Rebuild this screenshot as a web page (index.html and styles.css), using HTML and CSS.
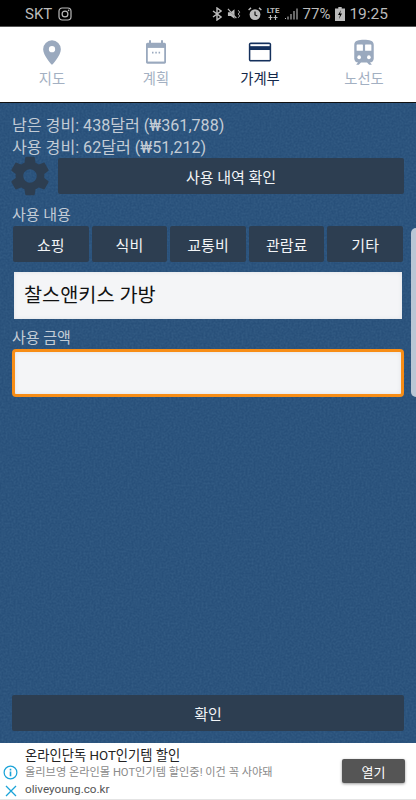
FILE: index.html
```html
<!DOCTYPE html>
<html lang="ko">
<head>
  <meta charset="UTF-8">
  <meta name="viewport" content="width=device-width, initial-scale=1.0">
  <title>가계부</title>
  <link rel="stylesheet" href="styles.css">
</head>
<body>
  <div class="status-bar">
    <div class="status-left">
      <span>SKT</span>
      <svg class="insta" viewBox="0 0 14 14" width="14" height="14"><rect x="1" y="1" width="12" height="12" rx="3.2" fill="none" stroke="#bbb" stroke-width="1.2"/><circle cx="7" cy="7" r="2.9" fill="none" stroke="#bbb" stroke-width="1.2"/><circle cx="10.6" cy="3.4" r=".8" fill="#bbb"/></svg>
    </div>
    <div class="status-right">
      <svg class="st-bt" viewBox="0 0 10 14" width="10" height="14"><path d="M1 4l8 6-4 3V1l4 3-8 6" fill="none" stroke="#bbb" stroke-width="1.4"/></svg>
      <svg class="st-mute" viewBox="0 0 16 14" width="15" height="14"><path d="M1 5h3l4-3v10L4 9H1z" fill="#bbb"/><path d="M1 2l10 10" stroke="#000" stroke-width="1"/><path d="M1 1.500l9 10" stroke="#bbb" stroke-width="1.200"/><path d="M12 3l1.500 2-1.500 2 1.500 2-1.500 2" fill="none" stroke="#bbb" stroke-width="1"/></svg>
      <svg class="st-alarm" viewBox="0 0 14 14" width="14" height="14"><circle cx="7" cy="7.600" r="5.400" fill="#bbb"/><path d="M7 4.500v3.400l2.300 1.200" fill="none" stroke="#000" stroke-width="1.100"/><path d="M.6 3L3 .9M13.400 3L11 .9" stroke="#bbb" stroke-width="1.400"/></svg>
      <div class="lte">
        <span>LTE</span>
        <svg viewBox="0 0 12 5" width="12" height="5"><path d="M3.500 0v5M1.500 2.500h4M8.500 0v5M6.500 2.500h4" stroke="#bbb" stroke-width="1.200"/></svg>
      </div>
      <svg class="st-signal" viewBox="0 0 14 14" width="14" height="14"><path d="M1 11.500h1M4 9.500v3M7 7v5.500M10 4v8.500M13 1.500v11" stroke="#bbb" stroke-width="1.100"/></svg>
      <span class="st-level">77%</span>
      <svg class="st-battery" viewBox="0 0 10 14" width="10" height="14"><path d="M3.300 0h3.400v1.500H10V14H0V1.500h3.300z" fill="#bbb"/><path d="M6 3L3 8h2l-1 4 3-5.500H5z" fill="#000"/></svg>
      <span class="clock">19:25</span>
    </div>
  </div>

  <nav class="tabs">
    <div class="tab">
      <svg viewBox="0 0 24 24" width="28" height="28"><path d="M12 2a7.600 7.600 0 0 0-7.600 7.600C4.400 15.300 12 23 12 23s7.600-7.700 7.600-13.400A7.600 7.600 0 0 0 12 2zm0 10.300a2.700 2.700 0 1 1 0-5.400 2.700 2.700 0 0 1 0 5.400z" fill="#9aa9be"/></svg>
      <span>지도</span>
    </div>
    <div class="tab">
      <svg viewBox="0 0 24 24" width="24" height="28" preserveAspectRatio="none"><path d="M5 2h2v2h10V2h2v2h1.500c.8 0 1.500.7 1.500 1.500v15c0 .8-.7 1.500-1.500 1.500h-17C2.700 22 2 21.300 2 20.500v-15C2 4.700 2.700 4 3.500 4H5z" fill="#9aa9be"/><rect x="3.800" y="8.500" width="16.400" height="11.700" fill="#fff"/><path d="M8 12.500h1.500M11.300 12.500h1.500M14.600 12.500h1.500" stroke="#9aa9be" stroke-width="1.500"/></svg>
      <span>계획</span>
    </div>
    <div class="tab active">
      <svg viewBox="0 0 24 24" width="26" height="28" preserveAspectRatio="none"><path d="M3.500 3.800h17c1 0 1.800.8 1.800 1.800v12.800c0 1-.8 1.800-1.800 1.800h-17c-1 0-1.800-.8-1.800-1.800V5.600c0-1 .8-1.800 1.800-1.800z" fill="#14305c"/><rect x="3.100" y="5.300" width="17.800" height="1.700" fill="#fff"/><rect x="3.100" y="10.300" width="17.800" height="8.500" fill="#fff"/></svg>
      <span>가계부</span>
    </div>
    <div class="tab">
      <svg viewBox="0 0 24 24" width="26" height="28" preserveAspectRatio="none"><path d="M12 1.500c-5 0-9 .6-9 4.500v11.500c0 1.900 1.600 3.500 3.500 3.500L5 22.500v.5h2.200l2-2h5.600l2 2H19v-.5L17.500 21c1.900 0 3.500-1.600 3.500-3.500V6c0-3.900-4-4.500-9-4.500z" fill="#9aa9be"/><rect x="5.200" y="5.500" width="5.800" height="5.500" rx=".5" fill="#fff"/><rect x="13" y="5.500" width="5.800" height="5.500" rx=".5" fill="#fff"/><circle cx="7.500" cy="16.500" r="1.700" fill="#fff"/><circle cx="16.500" cy="16.500" r="1.700" fill="#fff"/></svg>
      <span>노선도</span>
    </div>
  </nav>

  <main class="main">
    <svg class="noise" width="416" height="640">
      <filter id="grain"><feTurbulence type="fractalNoise" baseFrequency="0.5" numOctaves="2" seed="4"/><feColorMatrix values="0 0 0 0 0.06  0 0 0 0 0.16  0 0 0 0 0.3  0 0 0 0.7 -0.22"/></filter>
      <rect width="416" height="640" filter="url(#grain)"/>
    </svg>
    <div class="next-page"></div>

    <p class="budget">남은 경비: 438달러 (₩361,788)</p>
    <p class="budget">사용 경비: 62달러 (₩51,212)</p>
    <div class="history-row">
      <svg class="gear" viewBox="0 0 24 24" width="46" height="46"><path d="M19.430 12.980c.04-.32.07-.64.07-.98s-.03-.66-.07-.98l2.110-1.650c.19-.15.24-.42.12-.64l-2-3.460c-.12-.22-.39-.3-.61-.22l-2.490 1c-.52-.4-1.080-.73-1.690-.98l-.38-2.650C14.460 2.180 14.250 2 14 2h-4c-.25 0-.46.18-.49.42l-.38 2.650c-.61.25-1.170.59-1.690.98l-2.490-1c-.23-.09-.49 0-.61.22l-2 3.460c-.13.22-.07.49.12.64l2.110 1.650c-.04.32-.07.65-.07.98s.03.66.07.98l-2.110 1.650c-.19.15-.24.42-.12.64l2 3.460c.12.22.39.3.61.22l2.490-1c.52.4 1.080.73 1.690.98l.38 2.650c.03.24.24.42.49.42h4c.25 0 .46-.18.49-.42l.38-2.650c.61-.25 1.170-.59 1.690-.98l2.490 1c.23.09.49 0 .61-.22l2-3.460c.12-.22.07-.49-.12-.64l-2.110-1.650zM12 15.500c-1.930 0-3.500-1.570-3.500-3.500s1.570-3.500 3.500-3.500 3.500 1.570 3.500 3.500-1.570 3.500-3.500 3.500z" fill="#2d3e51"/></svg>
      <button class="btn history-btn">사용 내역 확인</button>
    </div>

    <p class="label">사용 내용</p>
    <div class="category-row">
      <button class="btn">쇼핑</button>
      <button class="btn">식비</button>
      <button class="btn">교통비</button>
      <button class="btn">관람료</button>
      <button class="btn">기타</button>
    </div>

    <div class="field">찰스앤키스 가방</div>
    <p class="label amount-label">사용 금액</p>
    <div class="field focused"></div>

    <button class="btn confirm-btn">확인</button>
  </main>

  <aside class="ad">
    <div class="ad-icons">
      <svg viewBox="0 0 16 16" width="15" height="15"><circle cx="8" cy="8" r="6.800" fill="none" stroke="#1aa3d8" stroke-width="1.300"/><path d="M8 4v1.800M8 7v5" stroke="#1aa3d8" stroke-width="1.700"/></svg>
      <svg viewBox="0 0 12 12" width="12" height="12"><path d="M1 1l10 10M11 1L1 11" stroke="#1aa3d8" stroke-width="1.300"/></svg>
    </div>
    <div class="ad-text">
      <div class="ad-title">온라인단독 HOT인기템 할인</div>
      <div class="ad-desc">올리브영 온라인몰 HOT인기템 할인중! 이건 꼭 사야돼</div>
      <div class="ad-url">oliveyoung.co.kr</div>
    </div>
    <button class="ad-open">열기</button>
  </aside>
</body>
</html>
```

FILE: styles.css
```css
html, body {
  height: 100%;
}
body {
  margin: 0;
  width: 416px;
  height: 800px;
  display: flex;
  flex-direction: column;
  overflow: hidden;
  background-color: #fff;
  font-family: Roboto, "Noto Sans CJK KR", sans-serif;
}
p {
  margin: 0;
}

/* status bar */
.status-bar {
  height: 27px;
  flex-shrink: 0;
  box-sizing: border-box;
  background-color: #000;
  border-bottom: 1px solid #555;
  color: #bbb;
  display: flex;
  justify-content: space-between;
  align-items: center;
  padding: 1px 28px 0 25px;
  font-size: 15px;
}
.status-left, .status-right {
  display: flex;
  align-items: center;
}
.status-left {
  gap: 6px;
}
.st-mute {
  margin-left: 5px;
}
.st-alarm {
  margin-left: 6px;
}
.lte {
  display: flex;
  flex-direction: column;
  align-items: center;
  font-size: 8px;
  line-height: 8px;
  font-weight: 700;
  margin-left: 5px;
}
.st-signal {
  margin-left: 4px;
}
.st-level {
  margin-left: 5px;
}
.st-battery {
  margin-left: 5px;
}
.clock {
  font-size: 15.5px;
  margin-left: 4px;
}

/* top tabs */
.tabs {
  height: 76px;
  flex-shrink: 0;
  display: flex;
  box-sizing: border-box;
  border-bottom: 1px solid #111;
  padding: 11px 0 0 0;
  background-color: #fff;
}
.tab {
  flex: 1;
  display: flex;
  flex-direction: column;
  align-items: center;
  gap: 3px;
  color: #a3b0c2;
  font-size: 14.3px;
  line-height: 20px;
}
.tab.active {
  color: #14284a;
}

/* main area */
.main {
  position: relative;
  flex: 1;
  display: flex;
  flex-direction: column;
  padding: 12px 12px 12px;
  background-color: #28507a;
  overflow: hidden;
}
.noise {
  position: absolute;
  top: 0;
  left: 0;
}
.next-page {
  position: absolute;
  left: 411px;
  top: 125px;
  width: 12px;
  height: 169px;
  border-radius: 5px;
  background-color: #b9c6d5;
}
.main > p, .main > div:not(.next-page), .main > button {
  position: relative;
}
.budget {
  color: #c3ccd6;
  font-size: 16.1px;
  line-height: 21.5px;
}
.label {
  color: #c3ccd6;
  font-size: 15px;
  line-height: 19px;
  margin-top: 12px;
}
.btn {
  height: 36px;
  border: none;
  border-radius: 2px;
  background-color: #2d3e51;
  color: #f2f4f6;
  font-family: inherit;
  font-size: 15px;
  padding: 0;
}
.history-row {
  display: flex;
  align-items: center;
  height: 36px;
  gap: 5px;
}
.gear {
  width: 46px;
  height: 46px;
  margin-left: -5px;
  flex-shrink: 0;
  position: relative;
}
.history-btn {
  flex: 1;
}
.category-row {
  display: flex;
  gap: 3px;
  margin: 1px 1px 0;
}
.category-row .btn {
  flex: 1;
}
.field {
  height: 47px;
  box-sizing: border-box;
  background-color: #f4f5f7;
  box-shadow: inset 0 0 4px #dfe1e5;
  margin: 10px 2px 0;
  padding-left: 10px;
  font-size: 19.7px;
  line-height: 47px;
  color: #111;
}
.amount-label {
  margin-top: 10px;
}
.field.focused {
  height: 48px;
  margin: 1px 0 0;
  border: 3px solid #f78d16;
  border-radius: 4px;
}
.confirm-btn {
  margin-top: auto;
}

/* ad banner */
.ad {
  height: 57px;
  flex-shrink: 0;
  box-sizing: border-box;
  display: flex;
  background-color: #fff;
  border-bottom: 1px solid #e4e4e4;
  position: relative;
}
.ad-icons {
  width: 25px;
  box-sizing: border-box;
  display: flex;
  flex-direction: column;
  align-items: center;
  justify-content: flex-end;
  gap: 5px;
  padding: 0 4px 2px 0;
}
.ad-text {
  flex: 1;
  padding-top: 3px;
}
.ad-title {
  font-size: 13.3px;
  line-height: 19px;
  color: #222;
}
.ad-desc {
  font-size: 11.2px;
  line-height: 16px;
  color: #8a8a8a;
}
.ad-url {
  font-size: 11.7px;
  line-height: 16px;
  color: #555;
}
.ad-open {
  align-self: center;
  width: 63px;
  height: 24px;
  margin: 0 11px 0 0;
  border: none;
  border-radius: 2px;
  background-color: #555;
  color: #fff;
  font-family: inherit;
  font-size: 13px;
  padding: 0;
  box-shadow: 0 1px 3px rgba(0,0,0,0.4);
}
```
